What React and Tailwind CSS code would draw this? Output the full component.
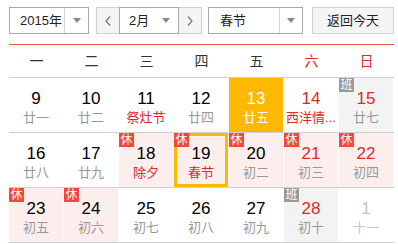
import React from 'react';

const weekdays = ['一', '二', '三', '四', '五', '六', '日'];

// w: weekend (red number), fest: red lunar text, bg: today | rest | work, badge: 休/班
const rows = [
  [
    { d: 9, l: '廿一' },
    { d: 10, l: '廿二' },
    { d: 11, l: '祭灶节', fest: true },
    { d: 12, l: '廿四' },
    { d: 13, l: '廿五', bg: 'today' },
    { d: 14, l: '西洋情...', w: true, fest: true },
    { d: 15, l: '廿七', w: true, bg: 'work', badge: '班' },
  ],
  [
    { d: 16, l: '廿八' },
    { d: 17, l: '廿九' },
    { d: 18, l: '除夕', fest: true, bg: 'rest', badge: '休' },
    { d: 19, l: '春节', fest: true, bg: 'rest', badge: '休', selected: true },
    { d: 20, l: '初二', bg: 'rest', badge: '休' },
    { d: 21, l: '初三', w: true, bg: 'rest', badge: '休' },
    { d: 22, l: '初四', w: true, bg: 'rest', badge: '休' },
  ],
  [
    { d: 23, l: '初五', bg: 'rest', badge: '休' },
    { d: 24, l: '初六', bg: 'rest', badge: '休' },
    { d: 25, l: '初七' },
    { d: 26, l: '初八' },
    { d: 27, l: '初九' },
    { d: 28, l: '初十', w: true, bg: 'work', badge: '班' },
    { d: 1, l: '十一', other: true },
  ],
];

const Caret = () => (
  <svg width="8" height="5" viewBox="0 0 8 5">
    <path d="M0 0h8L4 5z" fill="#8a8a8a" />
  </svg>
);

const Cell = ({ c }) => {
  let bg = 'bg-white';
  if (c.bg === 'today') bg = 'bg-[#ffb800]';
  if (c.bg === 'rest') bg = 'bg-[#fdeeee]';
  if (c.bg === 'work') bg = 'bg-[#f3f3f3]';

  let num = 'text-black';
  if (c.w) num = 'text-[#e0282e]';
  if (c.bg === 'today') num = 'text-white';
  if (c.other) num = 'text-[#c9c2b4]';

  let lunar = 'text-[#999]';
  if (c.fest) lunar = 'text-[#e0282e]';
  if (c.bg === 'today') lunar = 'text-white';
  if (c.other) lunar = 'text-[#c8c8c8]';

  return (
    <div className={`relative h-[54px] w-[54px] ${bg}`}>
      {c.selected && <div className="absolute inset-0 border-[3px] border-[#ffb800]"></div>}
      {c.badge && (
        <div
          className={`absolute left-0 top-0 flex h-[14px] w-[15px] items-center justify-center text-[12px] leading-none text-white ${
            c.badge === '休' ? 'bg-[#f5463c]' : 'bg-[#9a9a9a]'
          }`}
        >
          {c.badge}
        </div>
      )}
      <div className="flex flex-col items-center pt-[10px]">
        <div className={`text-[17px] leading-[22px] ${num}`}>{c.d}</div>
        <div className={`whitespace-nowrap text-[13px] leading-[16px] ${lunar}`}>{c.l}</div>
      </div>
    </div>
  );
};

export default function App() {
  return (
    <div
      className="h-[244px] w-[398px] bg-white"
      style={{ fontFamily: '"Liberation Sans", Arial, "Noto Sans CJK SC", sans-serif' }}
    >
      <div className="ml-[9px] w-[385px] pt-[7px]">
        {/* Toolbar */}
        <div className="flex h-[27px] items-stretch whitespace-nowrap text-[13px] text-[#222]">
          <div className="flex w-[80px] border border-[#a9a9a9] bg-white">
            <div className="flex flex-1 items-center pl-[10px]">2015年</div>
            <div className="flex w-[24px] shrink-0 items-center justify-center border-l border-[#d4d4d4]">
              <Caret />
            </div>
          </div>

          <div className="ml-[7px] flex w-[106px]">
            <div className="flex w-[23px] items-center justify-center border border-r-0 border-[#cfcfcf] bg-[#f5f5f5] text-[#777]">
              <svg width="6" height="10" viewBox="0 0 6 10">
                <path d="M5 0.5L1 5l4 4.5" fill="none" stroke="#777" strokeWidth="1.2" />
              </svg>
            </div>
            <div className="flex flex-1 items-center justify-between border border-[#a9a9a9] bg-white pl-[9px] pr-[8px]">
              <span>2月</span>
              <Caret />
            </div>
            <div className="flex w-[23px] items-center justify-center border border-l-0 border-[#cfcfcf] bg-[#f5f5f5]">
              <svg width="6" height="10" viewBox="0 0 6 10">
                <path d="M1 0.5L5 5l-4 4.5" fill="none" stroke="#777" strokeWidth="1.2" />
              </svg>
            </div>
          </div>

          <div className="ml-[6px] flex w-[95px] border border-[#a9a9a9] bg-white">
            <div className="flex flex-1 items-center pl-[11px]">春节</div>
            <div className="flex w-[23px] shrink-0 items-center justify-center border-l border-[#d4d4d4]">
              <Caret />
            </div>
          </div>

          <button className="ml-[9px] flex w-[82px] items-center justify-center border border-[#d0d0d0] bg-[#f5f5f5] text-[13px] text-[#222]">
            返回今天
          </button>
        </div>

        {/* Weekday header */}
        <div className="mt-[10px] grid h-[34px] grid-cols-7 border-b border-t border-b-[#d0d0d0] border-t-[#f0554a] text-[14px]">
          {weekdays.map((w, i) => (
            <div
              key={w}
              className={`flex items-center justify-center ${i >= 5 ? 'text-[#e0282e]' : 'text-[#333]'}`}
            >
              {w}
            </div>
          ))}
        </div>

        {/* Days */}
        {rows.map((row, r) => (
          <div key={r} className="grid grid-cols-7 border-b border-[#d0d0d0]">
            {row.map((c) => (
              <Cell key={`${r}-${c.d}`} c={c} />
            ))}
          </div>
        ))}
      </div>
    </div>
  );
}
